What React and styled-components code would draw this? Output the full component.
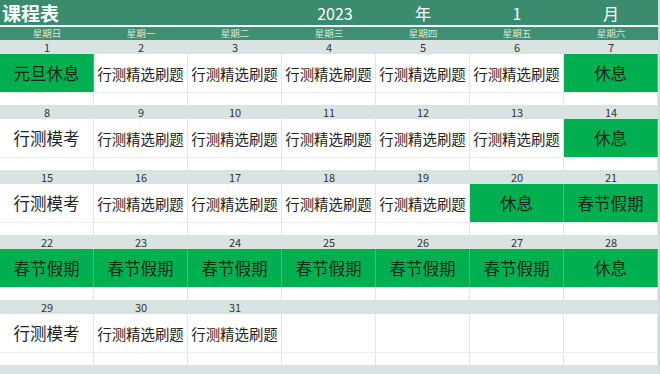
import React from 'react'
import styled, { createGlobalStyle } from 'styled-components'

const GlobalStyle = createGlobalStyle`
  html, body { margin: 0; padding: 0; background: #ffffff; }
  * { box-sizing: border-box; }
  body { font-family: "Noto Sans CJK SC", "Noto Sans", sans-serif; }
`

const STUDY = '行测精选刷题'

// each week: [day number, text, green?]
const weeks = [
  [[1, '元旦休息', true], [2, STUDY], [3, STUDY], [4, STUDY], [5, STUDY], [6, STUDY], [7, '休息', true]],
  [[8, '行测模考'], [9, STUDY], [10, STUDY], [11, STUDY], [12, STUDY], [13, STUDY], [14, '休息', true]],
  [[15, '行测模考'], [16, STUDY], [17, STUDY], [18, STUDY], [19, STUDY], [20, '休息', true], [21, '春节假期', true]],
  [[22, '春节假期', true], [23, '春节假期', true], [24, '春节假期', true], [25, '春节假期', true], [26, '春节假期', true], [27, '春节假期', true], [28, '休息', true]],
  [[29, '行测模考'], [30, STUDY], [31, STUDY], [null, ''], [null, ''], [null, ''], [null, '']],
]

const weekdays = ['星期日', '星期一', '星期二', '星期三', '星期四', '星期五', '星期六']

export default function App() {
  return (
    <>
      <GlobalStyle />
      <Sheet>
        <TitleBar>
          <Title>课程表</Title>
          <TitleCell $shift={6}>2023</TitleCell>
          <TitleCell>年</TitleCell>
          <TitleCell>1</TitleCell>
          <TitleCell>月</TitleCell>
        </TitleBar>
        <WeekdayRow>
          {weekdays.map((w) => (
            <Weekday key={w}>{w}</Weekday>
          ))}
        </WeekdayRow>
        {weeks.map((week, i) => (
          <Week key={i}>
            <DateRow>
              {week.map(([n], j) => (
                <DateCell key={j}>{n}</DateCell>
              ))}
            </DateRow>
            <ContentRow>
              {week.map(([n, text, green], j) => (
                <Cell key={j} $green={green} $small={text.length > 4}>
                  {text}
                </Cell>
              ))}
            </ContentRow>
            <BlankRow>
              {week.map((_, j) => (
                <BlankCell key={j} />
              ))}
            </BlankRow>
          </Week>
        ))}
        <DateRow />
      </Sheet>
    </>
  )
}

const Sheet = styled.div`
  width: 660px;
  height: 374px;
  overflow: hidden;
  border-right: 2px solid #d3dcdb;
  background: #ffffff;
`

const grid = `
  display: grid;
  grid-template-columns: repeat(7, 94px);
`

const TitleBar = styled.div`
  ${grid}
  height: 27px;
  background: #3b8b6f;
  color: #ffffff;
  align-items: center;
  border-bottom: 2px solid #ffffff;
`

const Title = styled.div`
  grid-column: span 3;
  padding-left: 2px;
  font-size: 19px;
  font-weight: 700;
  line-height: 1;
`

const TitleCell = styled.div`
  text-align: center;
  font-size: 16px;
  line-height: 1;
  padding-left: ${(p) => (p.$shift || 0) * 2}px;
`

const WeekdayRow = styled.div`
  ${grid}
  height: 13px;
  background: #3f8f73;
`

const Weekday = styled.div`
  text-align: center;
  font-size: 9.5px;
  line-height: 13px;
  color: #d3e9de;
`

const Week = styled.div`
  display: flex;
  flex-direction: column;
`

const DateRow = styled.div`
  ${grid}
  height: 14px;
  background: #d9e4e2;
`

const DateCell = styled.div`
  text-align: center;
  font-size: 11px;
  line-height: 14px;
  color: #333333;
`

const ContentRow = styled.div`
  ${grid}
  height: 39px;
  border-bottom: 1px solid #eeeeee;
`

const Cell = styled.div`
  display: flex;
  align-items: center;
  justify-content: center;
  white-space: nowrap;
  overflow: hidden;
  background: ${(p) => (p.$green ? '#00b050' : '#ffffff')};
  border-right: 1px solid ${(p) => (p.$green ? '#3cc074' : '#e4e4e4')};
  color: ${(p) => (p.$green ? '#0d2a18' : '#222222')};
  font-size: ${(p) => (p.$small ? '14.4px' : '16.5px')};
`

const BlankRow = styled.div`
  ${grid}
  height: 12px;
`

const BlankCell = styled.div`
  border-right: 1px solid #e4e4e4;
`
